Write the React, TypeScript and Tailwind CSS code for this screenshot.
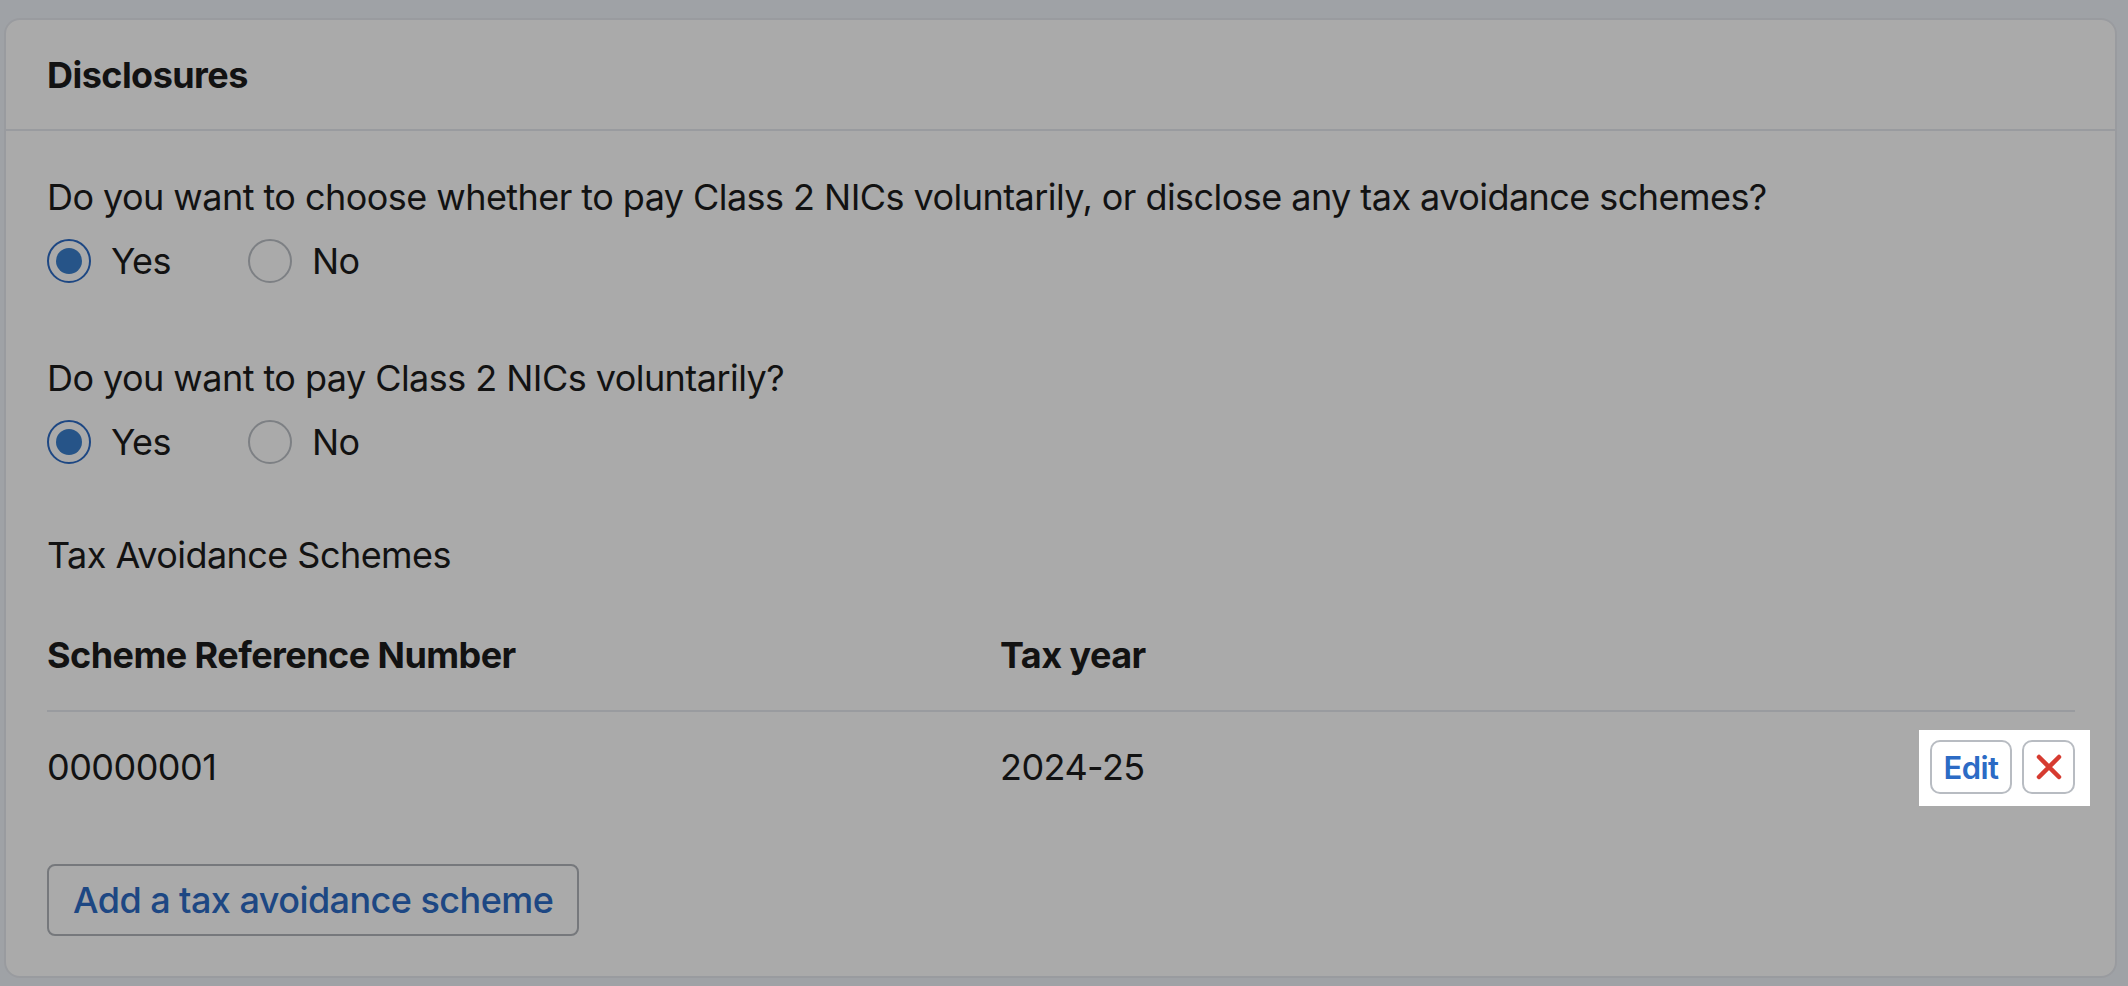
import React from 'react';

function Radio({ checked, label }: { checked: boolean; label: string }) {
  return (
    <label className="flex items-center gap-[20px]">
      <span
        className={
          checked
            ? 'flex h-[44px] w-[44px] items-center justify-center rounded-full border-[2px] border-[#2c6bc5] bg-white'
            : 'flex h-[44px] w-[44px] items-center justify-center rounded-full border-[2px] border-[#bcc0c6] bg-white'
        }
      >
        {checked && <span className="h-[26px] w-[26px] rounded-full bg-[#3a7fcc]" />}
      </span>
      <span className="text-[36px] leading-[48px] text-[#1b1b1b]">{label}</span>
    </label>
  );
}

function YesNo() {
  return (
    <div className="mt-[16px] flex items-center gap-[77px]">
      <Radio checked label="Yes" />
      <Radio checked={false} label="No" />
    </div>
  );
}

export default function App() {
  return (
    <div
      className="min-h-[986px] bg-[#eff3fa] pl-[4px] pr-[11px] pt-[18px] pb-[10px] tracking-[-0.55px]"
      style={{ fontFamily: 'Inter, "Noto Sans", sans-serif' }}
    >
      <div className="rounded-[16px] border-[2px] border-[#e6e9ef] bg-white">
        <div className="flex h-[111px] items-center border-b-[2px] border-[#e6e9ef] px-[41px]">
          <h2 className="text-[36px] font-bold leading-[48px] text-[#1b1b1b]">Disclosures</h2>
        </div>

        <div className="pl-[41px] pr-[40px] pt-[42px] pb-[40px]">
          <p className="text-[36px] leading-[48px] text-[#1b1b1b]">
            Do you want to choose whether to pay Class 2 NICs voluntarily, or disclose any tax avoidance schemes?
          </p>
          <YesNo />

          <p className="mt-[69px] text-[36px] leading-[48px] text-[#1b1b1b]">Do you want to pay Class 2 NICs voluntarily?</p>
          <YesNo />

          <p className="mt-[65px] text-[36px] leading-[48px] text-[#1b1b1b]">Tax Avoidance Schemes</p>

          <div className="mt-[52px]">
            <div className="grid grid-cols-[953px_1fr] border-b-[2px] border-[#e6e9ef] pb-[31px]">
              <div className="text-[36px] font-bold leading-[48px] text-[#1b1b1b]">Scheme Reference Number</div>
              <div className="text-[36px] font-bold leading-[48px] text-[#1b1b1b]">Tax year</div>
            </div>
            <div className="grid grid-cols-[953px_1fr_auto] items-center pt-[28px]">
              <div className="text-[36px] leading-[48px] text-[#1b1b1b]">00000001</div>
              <div className="text-[36px] leading-[48px] text-[#1b1b1b]">2024-25</div>
              <div className="relative flex items-center gap-[10px]">
                {/* tour spotlight */}
                <div className="pointer-events-none absolute -top-[10px] -left-[11px] -right-[15px] -bottom-[12px] z-10 shadow-[0_0_0_4000px_rgba(0,0,0,0.333)]" />
                <button className="h-[54px] w-[82px] rounded-[10px] border-[2px] border-[#b8bcc2] bg-white text-[31px] font-semibold leading-none text-[#2c6bc5]">
                  Edit
                </button>
                <button className="flex h-[54px] w-[53px] items-center justify-center rounded-[10px] border-[2px] border-[#b8bcc2] bg-white">
                  <svg width="26" height="26" viewBox="0 0 26 26">
                    <path d="M3 3 L23 23 M23 3 L3 23" stroke="#d63b30" strokeWidth="4.5" strokeLinecap="round" />
                  </svg>
                </button>
              </div>
            </div>
          </div>

          <button className="mt-[70px] h-[72px] rounded-[8px] border-[2px] border-[#b1b5bb] bg-white px-[24px] text-[36px] font-medium leading-none text-[#2c6bc5]">
            Add a tax avoidance scheme
          </button>
        </div>
      </div>
    </div>
  );
}
